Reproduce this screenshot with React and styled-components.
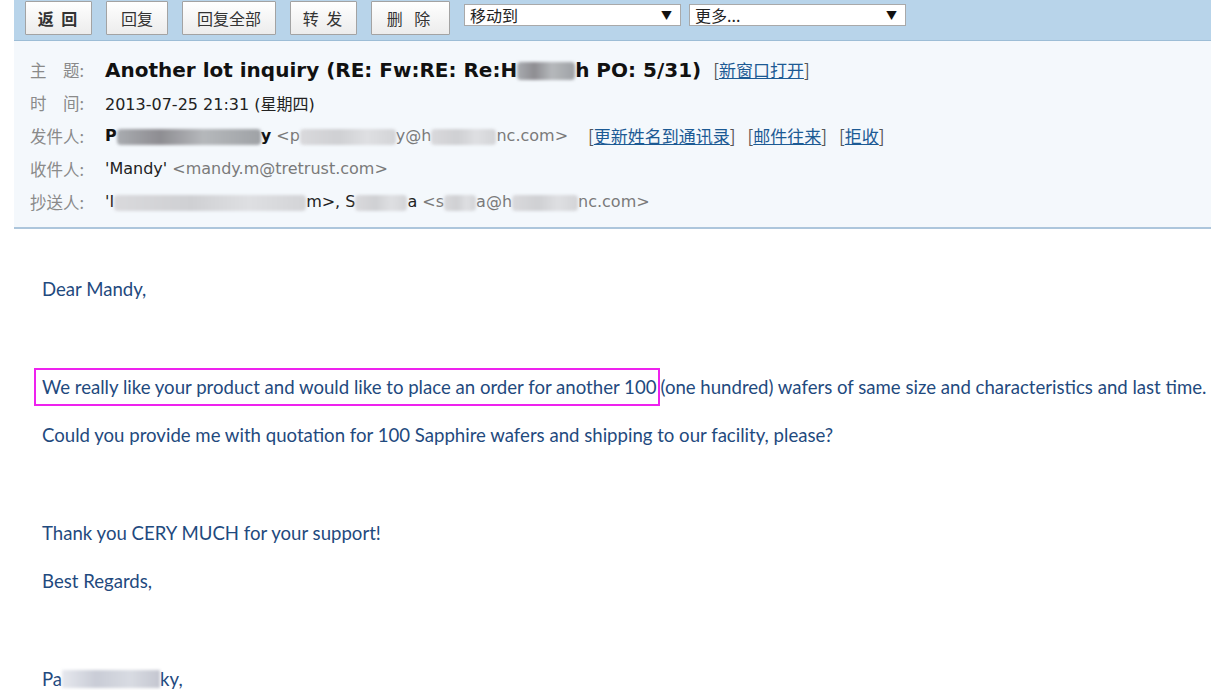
import React from "react";
import styled, { createGlobalStyle } from "styled-components";

const GlobalStyle = createGlobalStyle`
  html, body {
    margin: 0;
    padding: 0;
    background: #fff;
  }
  body {
    font-family: "DejaVu Sans", "Noto Sans CJK SC", sans-serif;
  }
`;

const Page = styled.div`
  width: 1211px;
  height: 690px;
  overflow: hidden;
  padding-left: 14px;
  box-sizing: border-box;
`;

const Toolbar = styled.div`
  height: 40px;
  background: #b8d4ea;
  border-bottom: 1px solid #9dbdd6;
  display: flex;
  align-items: flex-start;
  padding-left: 11px;
  gap: 14px;
`;

const ToolButton = styled.button`
  margin-top: 1px;
  height: 34px;
  width: ${(p) => p.w}px;
  border: 1px solid #a3a3a3;
  border-radius: 1px;
  background: linear-gradient(#ffffff, #ececec);
  font-family: "Noto Sans CJK SC", sans-serif;
  font-size: 16px;
  font-weight: ${(p) => (p.bold ? 700 : 400)};
  letter-spacing: ${(p) => p.spacing || 0}px;
  color: #333;
  padding: 0;
  cursor: pointer;
`;

const Selects = styled.div`
  display: flex;
  gap: 8px;
  margin-top: 4px;
`;

const Dropdown = styled.div`
  width: 217px;
  height: 22px;
  box-sizing: border-box;
  background: #fff;
  border: 1px solid #a9a9a9;
  display: flex;
  align-items: center;
  justify-content: space-between;
  padding: 0 8px 0 5px;
  font-family: "Noto Sans CJK SC", sans-serif;
  font-size: 16px;
  color: #222;
  span:last-child {
    font-size: 11px;
    color: #111;
  }
`;

const Header = styled.div`
  background: #f4f8fc;
  border-bottom: 2px solid #adc6dc;
  padding: 12px 0 0 16px;
  height: 188px;
  box-sizing: border-box;
`;

const Row = styled.div`
  display: flex;
  align-items: center;
  height: 33px;
  font-size: 16px;
  color: #222;
  white-space: nowrap;
`;

const Label = styled.div`
  width: 75px;
  flex: none;
  color: #8a8a8a;
  font-family: "Noto Sans CJK SC", sans-serif;
  font-size: 16.5px;
`;

const Subject = styled.span`
  font-size: 20px;
  font-weight: 700;
  color: #111;
`;

const Strong = styled.span`
  font-weight: 700;
  color: #111;
`;

const Addr = styled.span`
  color: #7a7a7a;
`;

const Blur = styled.span`
  display: inline-block;
  width: ${(p) => p.w}px;
  height: ${(p) => p.h || 16}px;
  vertical-align: middle;
  background: ${(p) =>
    p.dark
      ? "linear-gradient(90deg, #a9acb0, #8e8d92 30%, #b5b8bb 60%, #9fa2a6)"
      : "linear-gradient(90deg, #d9d9dc, #cfd0d3 40%, #dedfe2 70%, #d3d4d7)"};
  filter: blur(1.5px);
  border-radius: 4px;
`;

const Links = styled.span`
  font-family: "Noto Sans CJK SC", sans-serif;
  font-size: 17px;
  color: #555;
  margin-left: ${(p) => p.gap || 12}px;
`;

const LinkItem = styled.span`
  margin-right: 12px;
  a {
    color: #1c5a94;
    text-decoration: underline;
  }
`;

const Body = styled.div`
  padding: 36px 0 0 28px;
  font-family: Lato, "Liberation Sans", sans-serif;
  font-size: 18.6px;
  color: #1f4a7e;
  white-space: nowrap;
`;

const Para = styled.div`
  height: 48.7px;
  display: flex;
  align-items: center;
`;

const Marked = styled.span`
  display: inline-block;
  border: 2px solid #ee22ee;
  padding: 6px 2px 6px 6px;
  margin-left: -8px;
`;

const BodyBlur = styled.span`
  display: inline-block;
  width: ${(p) => p.w}px;
  height: 18px;
  vertical-align: middle;
  background: linear-gradient(90deg, #e6e8ee, #c9ccd6 35%, #d8dbe2 70%, #c4c6d0);
  filter: blur(1.5px);
`;

const toolButtons = [
  { text: "返 回", w: 67, bold: true, spacing: 2 },
  { text: "回复", w: 62 },
  { text: "回复全部", w: 94 },
  { text: "转 发", w: 67, spacing: 2 },
  { text: "删  除", w: 79, spacing: 4 },
];

const Link = ({ children }) => (
  <LinkItem>
    [<a href="#">{children}</a>]
  </LinkItem>
);

export default function App() {
  return (
    <Page>
      <GlobalStyle />
      <Toolbar>
        {toolButtons.map((b) => (
          <ToolButton key={b.text} w={b.w} bold={b.bold} spacing={b.spacing}>
            {b.text}
          </ToolButton>
        ))}
        <Selects>
          <Dropdown>
            <span>移动到</span>
            <span>▼</span>
          </Dropdown>
          <Dropdown>
            <span>更多...</span>
            <span>▼</span>
          </Dropdown>
        </Selects>
      </Toolbar>

      <Header>
        <Row>
          <Label>主　题:</Label>
          <Subject>
            Another lot inquiry (RE: Fw:RE: Re:H
            <Blur w={58} h={18} dark />
            h PO: 5/31)
          </Subject>
          <Links gap={12}>
            <Link>新窗口打开</Link>
          </Links>
        </Row>
        <Row>
          <Label>时　间:</Label>
          <span>
            2013-07-25 21:31 (<span style={{ fontFamily: "Noto Sans CJK SC" }}>星期四</span>)
          </span>
        </Row>
        <Row>
          <Label>发件人:</Label>
          <Strong>
            P<Blur w={144} dark />y
          </Strong>
          <Addr>
            &nbsp;&lt;p<Blur w={96} />y@h<Blur w={65} />nc.com&gt;
          </Addr>
          <Links gap={20}>
            <Link>更新姓名到通讯录</Link>
            <Link>邮件往来</Link>
            <Link>拒收</Link>
          </Links>
        </Row>
        <Row>
          <Label>收件人:</Label>
          <span>'Mandy'</span>
          <Addr>&nbsp;&lt;mandy.m@tretrust.com&gt;</Addr>
        </Row>
        <Row>
          <Label>抄送人:</Label>
          <span>
            'I<Blur w={192} />m&gt;, S<Blur w={52} />a&nbsp;
          </span>
          <Addr>
            &lt;s<Blur w={32} />a@h<Blur w={66} />nc.com&gt;
          </Addr>
        </Row>
      </Header>

      <Body>
        <Para>Dear Mandy,</Para>
        <Para />
        <Para>
          <Marked>We really like your product and would like to place an order for another 100</Marked>
          (one hundred) wafers of same size and characteristics and last time.
        </Para>
        <Para>Could you provide me with quotation for 100 Sapphire wafers and shipping to our facility, please?</Para>
        <Para />
        <Para>Thank you CERY MUCH for your support!</Para>
        <Para>Best Regards,</Para>
        <Para />
        <Para>
          Pa<BodyBlur w={98} />ky,
        </Para>
      </Body>
    </Page>
  );
}
